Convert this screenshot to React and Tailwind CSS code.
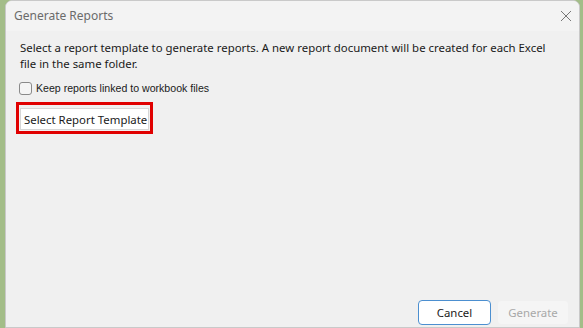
import React, { useState } from 'react';

const App = () => {
  const [linked, setLinked] = useState(false);

  return (
    <div className="flex h-[328px] w-[583px] bg-[#a3bd88]" style={{ fontFamily: '"Noto Sans", sans-serif' }}>
      <div className="ml-[5px] mr-[3px] flex flex-1 flex-col overflow-hidden rounded-t-[7px] border border-[#c9c9c9] bg-[#f0f0f0]">
        {/* title bar */}
        <div className="flex h-[30px] shrink-0 items-center justify-between bg-[#f3f3f3] pl-[8px] pr-[7px]">
          <span className="text-[12px] text-[#6b6b6b]">Generate Reports</span>
          <svg width="12" height="12" viewBox="0 0 12 12" className="text-[#777]">
            <path d="M1 1 L11 11 M11 1 L1 11" stroke="currentColor" strokeWidth="1" fill="none" />
          </svg>
        </div>

        {/* body */}
        <div className="flex flex-1 flex-col pl-[14px] pr-[10px] pt-[9px]">
          <p className="pr-[20px] text-[11.4px] leading-[16px] text-[#1a1a1a]">
            Select a report template to generate reports. A new report document will be created for each Excel file in the same folder.
          </p>

          <label className="mt-[9px] flex items-center gap-[4px] text-[10.6px] text-[#1a1a1a]" style={{ fontFamily: '"Liberation Sans", Arial, sans-serif' }}>
            <span
              onClick={() => setLinked(!linked)}
              className="ml-[-1px] h-[13px] w-[13px] rounded-[3px] border border-[#8a8a8a] bg-[#f5f5f5]"
            />
            Keep reports linked to workbook files
          </label>

          <div className="mt-[5px] flex">
            <div className="ml-[-4px] border-[3px] border-[#e00000] p-[1px]">
              <button className="h-[22px] border border-[#d6d6d6] bg-white pl-[3px] pr-[1px] text-[11.4px] text-[#1a1a1a]">
                Select Report Template
              </button>
            </div>
          </div>

          <div className="mt-auto mb-[2px] flex justify-end gap-[6px]">
            <button className="h-[25px] w-[73px] rounded-[4px] border border-[#4c8fd0] bg-white text-[11.4px] text-[#1a1a1a]">
              Cancel
            </button>
            <button disabled className="h-[25px] w-[72px] rounded-[4px] border border-[#f0f0f0] bg-[#f5f5f5] text-[11.4px] text-[#a8a8a8]">
              Generate
            </button>
          </div>
        </div>
      </div>
    </div>
  );
};

export default App;
